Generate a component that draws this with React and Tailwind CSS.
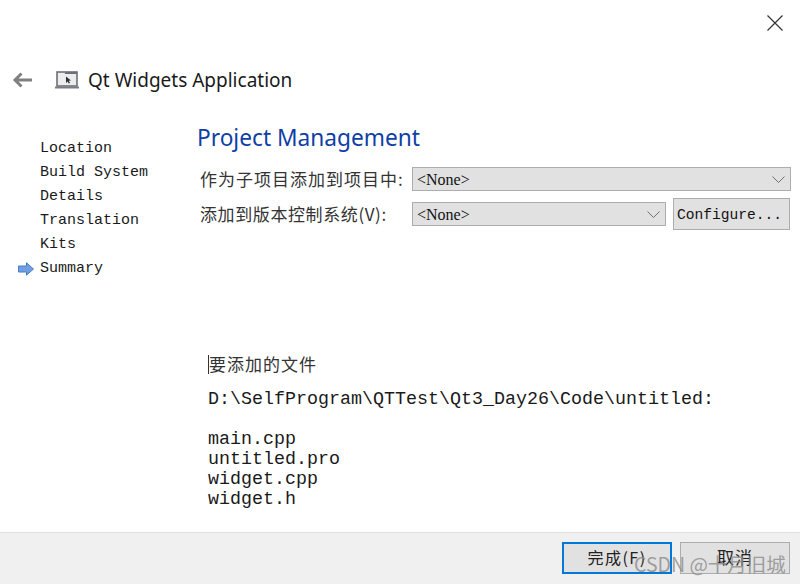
const mono = "font-['Liberation_Mono',monospace]";
const cjk = "font-['Noto_Sans_CJK_SC','Noto_Sans',sans-serif]";

function Chevron() {
  return (
    <svg width="13" height="7" viewBox="0 0 13 7" fill="none" stroke="#6f6f6f" strokeWidth="1">
      <path d="M0.5 0.5 L6.5 6.5 L12.5 0.5" />
    </svg>
  );
}

function Combo({ className }) {
  return (
    <div className={`h-6 flex items-center justify-between pl-[4px] pr-[5px] pt-[1px] bg-[#e1e1e1] border border-[#adadad] font-['Liberation_Serif',serif] text-[16px] text-[#111] ${className}`}>
      <span>&lt;None&gt;</span>
      <Chevron />
    </div>
  );
}

function StepItem({ label, active }) {
  return (
    <div className="h-6 flex items-center relative">
      {active && (
        <svg className="absolute left-[18px] top-[5px]" width="16" height="14" viewBox="0 0 16 14">
          <path d="M0.5 4 H8.5 V0.8 L15.5 7 L8.5 13.2 V10 H0.5 Z" fill="#6f9fe0" stroke="#4a7cc4" strokeWidth="1" />
        </svg>
      )}
      <span className={`pl-10 ${mono} text-[15px] text-[#1a1a1a]`}>{label}</span>
    </div>
  );
}

export default function App() {
  return (
    <div className="w-[800px] h-[584px] bg-white flex flex-col relative overflow-hidden">
      <div className="h-[56px] flex justify-end items-start pt-[15px] pr-[17px]">
        <svg width="16" height="16" viewBox="0 0 16 16" stroke="#333" strokeWidth="1.2" fill="none">
          <path d="M0.5 0.5 L15.5 15.5 M15.5 0.5 L0.5 15.5" />
        </svg>
      </div>

      <div className="h-[48px] flex items-center">
        <svg className="ml-[12px]" width="21" height="16" viewBox="0 0 21 16" fill="none" stroke="#808080" strokeWidth="3">
          <path d="M20 8 H3 M9.5 1.5 L3 8 L9.5 14.5" />
        </svg>
        <svg className="ml-[22px]" width="24" height="18" viewBox="0 0 24 18">
          <rect x="2" y="1" width="20" height="14" fill="#ececec" stroke="#6e6e78" strokeWidth="1.6" />
          <path d="M2 3 H9.5 L11 1 H22 V3 Z" fill="#6e6e78" />
          <path d="M0 15.5 H24 V17.5 H0 Z" fill="#7a7a84" />
          <path d="M11 5.5 L11 12 L12.6 10.4 L13.8 12.6 L15 12 L13.8 9.8 L16 9.6 Z" fill="#2f2f38" />
        </svg>
        <span className="ml-[9px] font-['Noto_Sans',sans-serif] text-[19px] text-[#1a1a1a]">Qt Widgets Application</span>
      </div>

      <div className="flex-1 flex">
        <div className="w-[197px] pt-[33px] flex flex-col">
          <StepItem label="Location" />
          <StepItem label="Build System" />
          <StepItem label="Details" />
          <StepItem label="Translation" />
          <StepItem label="Kits" />
          <StepItem label="Summary" active />
        </div>

        <div className="flex-1 flex flex-col">
          <h1 className="h-[32px] mt-[18px] font-['Noto_Sans',sans-serif] text-[22.7px] leading-[32px] text-[#0f3fa6]">Project Management</h1>

          <div className="mt-[13px] flex items-center pl-[3px]">
            <span className={`w-[212px] ${cjk} text-[17px] leading-6 tracking-[1px] text-[#333]`}>作为子项目添加到项目中:</span>
            <Combo className="w-[379px]" />
          </div>

          <div className="mt-[7px] flex items-center pl-[3px]">
            <span className={`w-[212px] ${cjk} text-[17px] leading-6 tracking-[0.6px] text-[#333]`}>添加到版本控制系统(V):</span>
            <Combo className="w-[254px]" />
            <div className={`ml-[7px] w-[117px] h-8 flex items-center justify-center pr-[4px] pt-[3px] bg-[#e1e1e1] border border-[#adadad] ${mono} text-[14.6px] text-[#111]`}>Configure...</div>
          </div>

          <div className="mt-[124px] ml-[11px] flex items-center h-[20px]">
            <span className="w-px h-[19px] bg-[#333]" />
            <span className={`${cjk} text-[17px] leading-6 tracking-[1px] text-[#333]`}>要添加的文件</span>
          </div>

          <div className={`mt-[16px] ml-[11px] ${mono} text-[18.33px] leading-[20px] text-[#1a1a1a]`}>
            <div>D:\SelfProgram\QTTest\Qt3_Day26\Code\untitled:</div>
            <div className="h-[20px]" />
            <div>main.cpp</div>
            <div>untitled.pro</div>
            <div>widget.cpp</div>
            <div>widget.h</div>
          </div>
        </div>
      </div>

      <div className="h-[52px] bg-[#f0f0f0] border-t border-[#dfdfdf] flex justify-end items-start pt-[9px] pr-[10px] gap-[8px]">
        <div className={`w-[110px] h-8 flex items-center justify-center pb-[2px] bg-[#e1e1e1] border-2 border-[#0078d7] ${cjk} text-[16px] tracking-[1.5px] text-[#222]`}>完成(F)</div>
        <div className={`w-[110px] h-8 flex items-center justify-center pb-[2px] bg-[#e1e1e1] border border-[#adadad] ${cjk} text-[17px] tracking-[1px] text-[#222]`}>取消</div>
      </div>

      <div className={`absolute left-[634px] top-[552px] ${cjk} text-[19.5px] leading-[24px] text-[#8a8a8a]/80 whitespace-nowrap`}>CSDN @十月旧城</div>
    </div>
  );
}
